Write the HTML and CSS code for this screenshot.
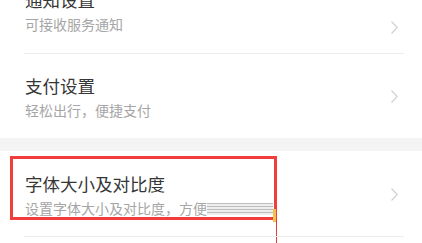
FILE: index.html
```html
<!DOCTYPE html>
<html lang="zh">
<head>
  <meta charset="UTF-8" />
  <title>设置</title>
  <link rel="stylesheet" href="styles.css">
</head>
<body>

  <div class="group">
    <div class="item cut">
      <div class="text">
        <div class="title">通知设置</div>
        <div class="sub">可接收服务通知</div>
      </div>
      <svg class="arrow" width="7" height="13" viewBox="0 0 7 13"><polyline points="0.5,0.5 6.2,6.5 0.5,12.5" /></svg>
    </div>
    <div class="item last">
      <div class="text">
        <div class="title">支付设置</div>
        <div class="sub">轻松出行，便捷支付</div>
      </div>
      <svg class="arrow" width="7" height="13" viewBox="0 0 7 13"><polyline points="0.5,0.5 6.2,6.5 0.5,12.5" /></svg>
    </div>
  </div>

  <div class="band"></div>

  <div class="group">
    <div class="item marked">
      <div class="text">
        <div class="title">字体大小及对比度</div>
        <div class="sub">设置字体大小及对比度，方便<span class="smear"></span></div>
      </div>
      <svg class="arrow" width="7" height="13" viewBox="0 0 7 13"><polyline points="0.5,0.5 6.2,6.5 0.5,12.5" /></svg>
      <!-- annotation overlay -->
      <div class="highlight"></div>
      <div class="guide"></div>
      <div class="tick"></div>
    </div>
  </div>

</body>
</html>
```

FILE: styles.css
```css
* {
  box-sizing: border-box;
}
html, body {
  margin: 0;
  padding: 0;
  background: #ffffff;
  font-family: "Noto Sans CJK SC", "Noto Sans", sans-serif;
  color: #333;
  width: 422px;
  height: 243px;
  overflow: hidden;
}
.group {
  background: #fff;
}
.item {
  position: relative;
  display: flex;
  align-items: center;
  height: 84px;
  padding: 0 24px 0 25px;
  margin-right: 18px;
}
.item::after {
  content: "";
  position: absolute;
  left: 24px;
  right: 0;
  bottom: 0;
  height: 1px;
  background: #ececec;
}
.item.last::after {
  display: none;
}
.item.cut {
  height: 54px;
  align-items: flex-end;
  padding-bottom: 20px;
}
.item.marked {
  height: 86px;
}
.text {
  flex: 1;
  margin-top: 2px;
}
.title {
  font-size: 17.5px;
  line-height: 22px;
  color: #363636;
}
.sub {
  margin-top: 3px;
  font-size: 14px;
  line-height: 20px;
  color: #a6a6a6;
  white-space: nowrap;
}
.smear {
  display: inline-block;
  width: 66px;
  height: 12px;
  vertical-align: -1px;
  background: repeating-linear-gradient(to bottom, #bdbdbd 0, #bdbdbd 1px, #eeeeee 1px, #eeeeee 3px);
}
.arrow {
  flex: none;
  margin-right: -18px;
}
.arrow polyline {
  fill: none;
  stroke: #cfcfcf;
  stroke-width: 1.1;
}
.band {
  height: 13px;
  background: #f4f4f4;
}
.highlight {
  position: absolute;
  left: 10px;
  top: 5px;
  width: 267px;
  height: 64px;
  border: 3px solid #f23d3d;
}
.guide {
  position: absolute;
  left: 276px;
  top: 69px;
  width: 1px;
  height: 30px;
  background: #e83a3a;
}
.tick {
  position: absolute;
  left: 273px;
  top: 58px;
  width: 3px;
  height: 13px;
  background: #f2c24a;
}
```
